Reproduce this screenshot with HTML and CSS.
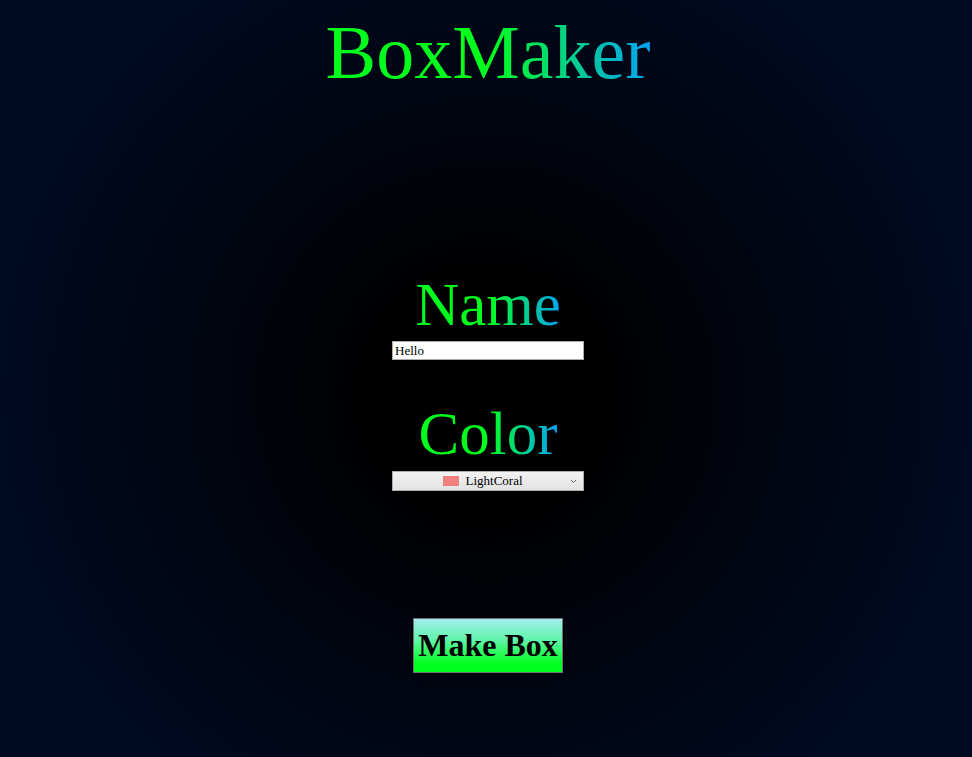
FILE: index.html
```html
<!DOCTYPE html>
<html>
<head>
<meta charset="utf-8">
<title>BoxMaker</title>
<link rel="stylesheet" href="styles.css">
</head>
<body>
<main class="page">
  <h1 class="title"><span class="grad">BoxMaker</span></h1>
  <section class="field field-name">
    <h2 class="label"><span class="grad">Name</span></h2>
    <input class="text-input" type="text" value="Hello">
  </section>
  <section class="field field-color">
    <h2 class="label"><span class="grad">Color</span></h2>
    <div class="select">
      <span class="swatch"></span>
      <span class="select-text">LightCoral</span>
      <svg class="chev" width="7" height="5" viewBox="0 0 7 5"><path d="M1 1 L3.5 3.5 L6 1" fill="none" stroke="#666" stroke-width="1"/></svg>
    </div>
  </section>
  <button class="make">Make Box</button>
</main>
</body>
</html>
```
FILE: styles.css
```css
html, body {
  margin: 0;
  padding: 0;
}
body {
  min-height: 100vh;
  background: radial-gradient(circle at 50% 52%, #000000 0px, #000000 110px, #000a22 500px);
  font-family: "Liberation Serif", "DejaVu Serif", serif;
}
.page {
  display: flex;
  flex-direction: column;
  align-items: center;
  height: 757px;
  padding-left: 4px;
  box-sizing: border-box;
}
.grad {
  display: inline-block;
  background: linear-gradient(to right, #00ff1c 0%, #00ff1c 50%, #00a3f5 100%);
  -webkit-background-clip: text;
  background-clip: text;
  color: transparent;
}
.title {
  margin: 10px 0 0;
  font-size: 76px;
  font-weight: normal;
  line-height: 85px;
}
.label {
  margin: 0;
  font-size: 61px;
  font-weight: normal;
  line-height: 69px;
}
.field {
  display: flex;
  flex-direction: column;
  align-items: center;
}
.field-name {
  margin-top: 175px;
}
.field-color {
  margin-top: 39px;
}
.text-input {
  margin-top: 2px;
  box-sizing: border-box;
  width: 192px;
  height: 19px;
  border: 1px solid #a9a9a9;
  padding: 0 2px;
  background: #fff;
  font-family: "Liberation Serif", serif;
  font-size: 13px;
  color: #000;
  outline: none;
}
.select {
  margin-top: 3px;
  box-sizing: border-box;
  width: 192px;
  height: 20px;
  border: 1px solid #adadad;
  background: linear-gradient(#f2f2f2, #e3e3e3);
  display: flex;
  align-items: center;
  justify-content: center;
  gap: 6px;
  position: relative;
  font-size: 13px;
  color: #000;
  padding-right: 10px;
}
.swatch {
  width: 16px;
  height: 10px;
  background: #f08080;
}
.chev {
  position: absolute;
  right: 6px;
  top: 7px;
}
.make {
  margin-top: 127px;
  box-sizing: border-box;
  width: 150px;
  height: 55px;
  border: 1px solid #707070;
  background: linear-gradient(#a3efef 0%, #5ff4a8 40%, #00ff1c 85%, #00ff1c 100%);
  font-family: "Liberation Serif", serif;
  font-weight: bold;
  font-size: 32px;
  color: #000;
  padding: 0;
}
```
